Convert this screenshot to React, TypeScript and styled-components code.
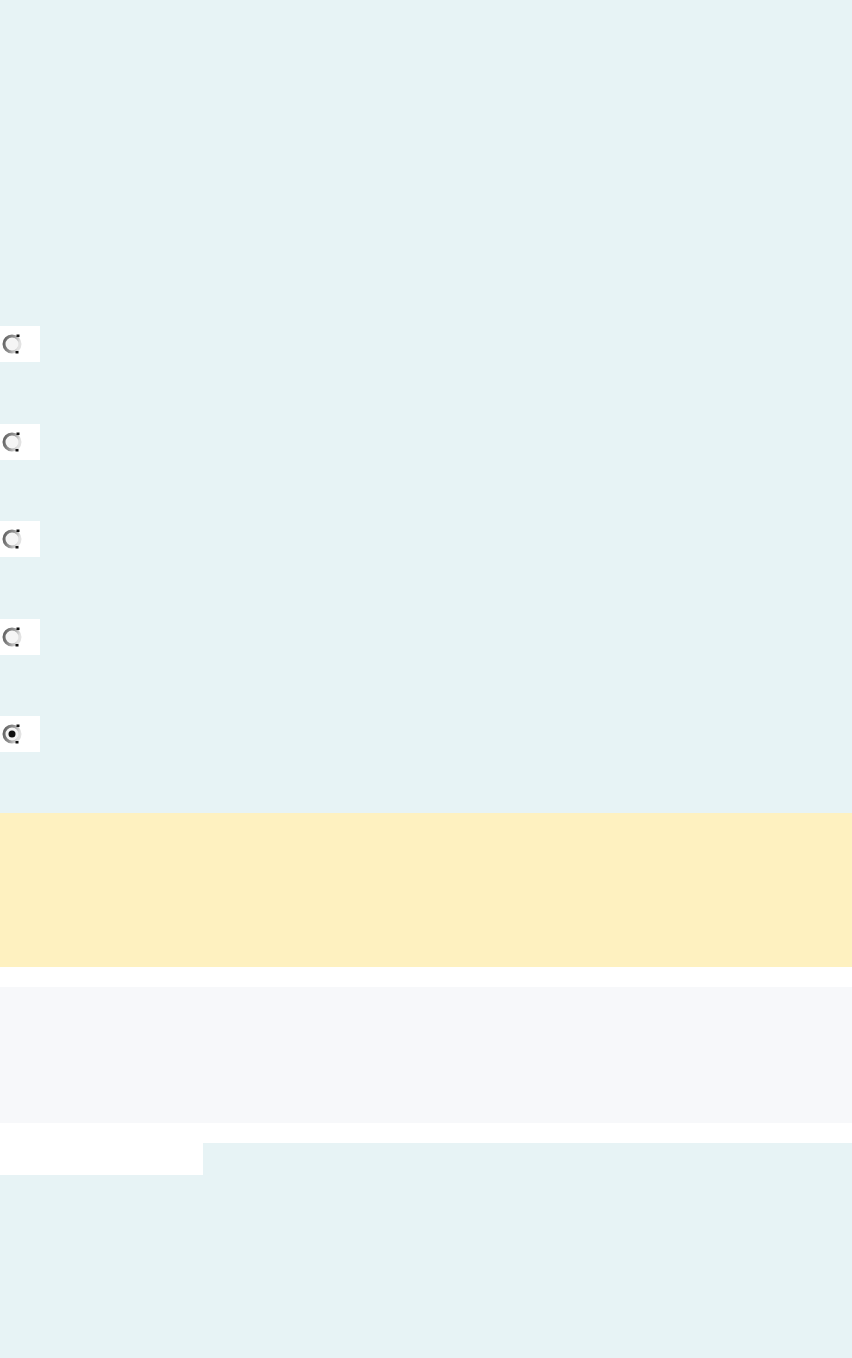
import React from 'react';
import styled, { createGlobalStyle } from 'styled-components';

const GlobalStyle = createGlobalStyle`
  html, body {
    margin: 0;
    padding: 0;
    background: #ffffff;
    font-family: "Liberation Sans", Arial, sans-serif;
  }
`;

const Page = styled.div`
  width: 852px;
  min-height: 1358px;
  display: flex;
  flex-direction: column;
`;

const QuizSection = styled.section`
  background: #e7f3f5;
  padding: 326px 0 61px;
  display: flex;
  flex-direction: column;
  gap: 61.5px;
`;

const OptionBox = styled.label`
  width: 40px;
  height: 36px;
  background: #ffffff;
  display: flex;
  align-items: center;
  padding-left: 1px;
  box-sizing: border-box;
`;

const Notice = styled.div`
  background: #fef1c0;
  height: 154px;
`;

const InfoPanel = styled.div`
  background: #f7f8fa;
  height: 136px;
  margin-top: 20px;
`;

const Footer = styled.footer`
  background: #e7f3f5;
  margin-top: 20px;
  flex: 1;
  min-height: 215px;
`;

const Tab = styled.div`
  width: 203px;
  height: 32px;
  background: #ffffff;
`;

const Radio: React.FC<{ checked?: boolean }> = ({ checked }) => (
  <svg width="22" height="22" viewBox="0 0 22 22">
    <defs>
      <linearGradient id="ring" x1="0" y1="0" x2="1" y2="0.3">
        <stop offset="0" stopColor="#5e5e5e" />
        <stop offset="0.55" stopColor="#929292" />
        <stop offset="1" stopColor="#e2e2e2" />
      </linearGradient>
    </defs>
    <circle cx="11" cy="11" r="8" fill="#f5f5f5" stroke="url(#ring)" strokeWidth="3" />
    <rect x="15.5" y="1.5" width="3" height="2.5" fill="#111" />
    <rect x="14.5" y="18" width="3" height="2.5" fill="#111" />
    {checked && <circle cx="11" cy="11" r="3.5" fill="#111" />}
  </svg>
);

const options = [false, false, false, false, true];

export default function App() {
  return (
    <Page>
      <GlobalStyle />
      <QuizSection>
        {options.map((checked, i) => (
          <OptionBox key={i}>
            <Radio checked={checked} />
          </OptionBox>
        ))}
      </QuizSection>
      <Notice />
      <InfoPanel />
      <Footer>
        <Tab />
      </Footer>
    </Page>
  );
}
